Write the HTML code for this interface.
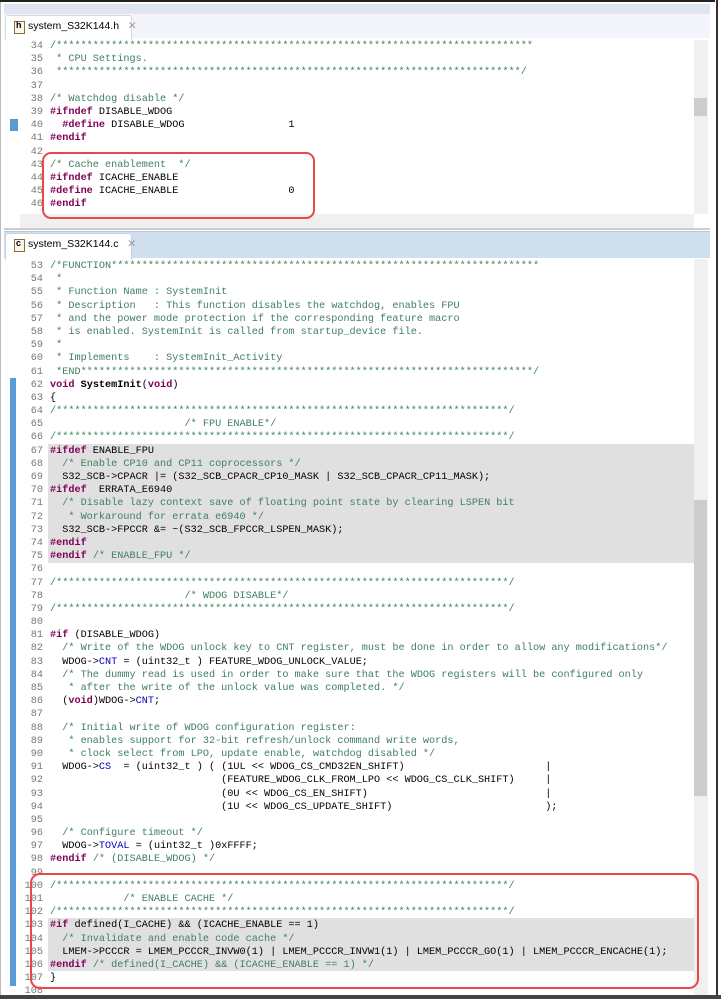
<!DOCTYPE html>
<html><head><meta charset="utf-8"><style>
body{margin:0;width:721px;height:999px;background:#fff;position:relative;overflow:hidden;font-family:"Liberation Mono",monospace}
.abs{position:absolute}
pre{margin:0;font-family:"Liberation Mono",monospace;font-size:10.2px;line-height:13.18px;color:#000;white-space:pre}
.ln{position:absolute;left:18px;width:25px;text-align:right;color:#787878}
.c{color:#3f7f5f}.k{color:#7f0055;font-weight:bold}.b{color:#0000c0}
.hl{position:absolute;left:48px;width:646px;background:#e0e0e0}
.tab{position:absolute;font-family:"Liberation Sans",sans-serif;font-size:10.5px;color:#000;white-space:nowrap}
</style></head><body>
<div class="abs" style="left:0;top:0;width:715px;height:999px;border-left:1px solid #bbb;border-right:2px solid #333"></div>
<div class="abs" style="left:0;top:0;width:715px;height:2px;background:#222"></div>
<!-- top panel -->
<div class="abs" style="left:4px;top:4px;width:706px;height:10px;background:#dfe6f2"></div>
<div class="abs" style="left:4px;top:14px;width:706px;height:24px;background:#f3f5fa"></div>
<div class="abs" style="left:5px;top:15px;width:125px;height:24px;background:#fff;border:1px solid #d4d9e3;border-bottom:none;border-radius:3px 3px 0 0"></div>
<div class="abs" style="left:14px;top:21px;width:9px;height:11px;border:1px solid #8a6d3b;background:#fbf6e8"></div>
<div class="tab" style="left:16px;top:20px;font-size:9px;font-weight:bold">h</div>
<div class="tab" style="left:28px;top:20px">system_S32K144.h&nbsp;&nbsp; <span style="color:#999">✕</span></div>
<div class="abs" style="left:694px;top:40px;width:14px;height:174px;background:#f0f0f0"></div>
<div class="abs" style="left:694px;top:98px;width:13px;height:18px;background:#cdcdcd"></div>
<div class="abs" style="left:20px;top:214px;width:674px;height:14px;background:#f0f0f0"></div>
<div class="abs" style="left:10px;top:119px;width:8px;height:12px;background:#5b9bd5"></div>
<div class="abs" style="left:4px;top:228px;width:706px;height:2px;background:#ccc"></div>
<pre class="ln" style="top:40px">34
35
36
37
38
39
40
41
42
43
44
45
46</pre>
<pre class="abs" style="left:50px;top:40px"><span class="c">/******************************************************************************
 * CPU Settings.
 ****************************************************************************/</span>

<span class="c">/* Watchdog disable */</span>
<span class="k">#ifndef</span> DISABLE_WDOG
  <span class="k">#define</span> DISABLE_WDOG                 1
<span class="k">#endif</span>

<span class="c">/* Cache enablement  */</span>
<span class="k">#ifndef</span> ICACHE_ENABLE
<span class="k">#define</span> ICACHE_ENABLE                  0
<span class="k">#endif</span></pre>
<div class="abs" style="left:42px;top:152px;width:269px;height:63px;border:2px solid #e8474c;border-radius:9px"></div>

<!-- bottom panel -->
<div class="abs" style="left:4px;top:231px;width:706px;height:26px;background:#cfdfee;border-top:1px solid #b8c8dc"></div>
<div class="abs" style="left:5px;top:233px;width:125px;height:26px;background:#fff;border:1px solid #c9d3e0;border-bottom:none;border-radius:3px 3px 0 0"></div>
<div class="abs" style="left:14px;top:239px;width:9px;height:11px;border:1px solid #8a6d3b;background:#fbf6e8"></div>
<div class="tab" style="left:16px;top:238px;font-size:9px;font-weight:bold">c</div>
<div class="tab" style="left:28px;top:238px">system_S32K144.c&nbsp;&nbsp; <span style="color:#999">✕</span></div>
<div class="abs" style="left:694px;top:259px;width:14px;height:740px;background:#f0f0f0"></div>
<div class="abs" style="left:694px;top:500px;width:13px;height:296px;background:#cdcdcd"></div>
<div class="abs" style="left:10px;top:378px;width:6px;height:608px;background:#5b9bd5"></div>
<div class="hl" style="top:444px;height:119px"></div>
<div class="hl" style="top:918px;height:53px"></div>
<pre class="ln" style="top:260px">53
54
55
56
57
58
59
60
61
62
63
64
65
66
67
68
69
70
71
72
73
74
75
76
77
78
79
80
81
82
83
84
85
86
87
88
89
90
91
92
93
94
95
96
97
98
99
100
101
102
103
104
105
106
107
108</pre>
<pre class="abs" style="left:50px;top:260px"><span class="c">/*FUNCTION**********************************************************************
 *
 * Function Name : SystemInit
 * Description   : This function disables the watchdog, enables FPU
 * and the power mode protection if the corresponding feature macro
 * is enabled. SystemInit is called from startup_device file.
 *
 * Implements    : SystemInit_Activity
 *END**************************************************************************/</span>
<span class="k">void</span> <b>SystemInit</b>(<span class="k">void</span>)
{
<span class="c">/**************************************************************************/</span>
<span class="c">                      /* FPU ENABLE*/</span>
<span class="c">/**************************************************************************/</span>
<span class="k">#ifdef</span> ENABLE_FPU
  <span class="c">/* Enable CP10 and CP11 coprocessors */</span>
  S32_SCB-&gt;CPACR |= (S32_SCB_CPACR_CP10_MASK | S32_SCB_CPACR_CP11_MASK);
<span class="k">#ifdef</span>  ERRATA_E6940
  <span class="c">/* Disable lazy context save of floating point state by clearing LSPEN bit
   * Workaround for errata e6940 */</span>
  S32_SCB-&gt;FPCCR &amp;= ~(S32_SCB_FPCCR_LSPEN_MASK);
<span class="k">#endif</span>
<span class="k">#endif</span> <span class="c">/* ENABLE_FPU */</span>

<span class="c">/**************************************************************************/</span>
<span class="c">                      /* WDOG DISABLE*/</span>
<span class="c">/**************************************************************************/</span>

<span class="k">#if</span> (DISABLE_WDOG)
  <span class="c">/* Write of the WDOG unlock key to CNT register, must be done in order to allow any modifications*/</span>
  WDOG-&gt;<span class="b">CNT</span> = (uint32_t ) FEATURE_WDOG_UNLOCK_VALUE;
  <span class="c">/* The dummy read is used in order to make sure that the WDOG registers will be configured only
   * after the write of the unlock value was completed. */</span>
  (<span class="k">void</span>)WDOG-&gt;<span class="b">CNT</span>;

  <span class="c">/* Initial write of WDOG configuration register:
   * enables support for 32-bit refresh/unlock command write words,
   * clock select from LPO, update enable, watchdog disabled */</span>
  WDOG-&gt;<span class="b">CS</span>  = (uint32_t ) ( (1UL &lt;&lt; WDOG_CS_CMD32EN_SHIFT)                       |
                            (FEATURE_WDOG_CLK_FROM_LPO &lt;&lt; WDOG_CS_CLK_SHIFT)     |
                            (0U &lt;&lt; WDOG_CS_EN_SHIFT)                             |
                            (1U &lt;&lt; WDOG_CS_UPDATE_SHIFT)                         );

  <span class="c">/* Configure timeout */</span>
  WDOG-&gt;<span class="b">TOVAL</span> = (uint32_t )0xFFFF;
<span class="k">#endif</span> <span class="c">/* (DISABLE_WDOG) */</span>

<span class="c">/**************************************************************************/</span>
<span class="c">            /* ENABLE CACHE */</span>
<span class="c">/**************************************************************************/</span>
<span class="k">#if</span> defined(I_CACHE) &amp;&amp; (ICACHE_ENABLE == 1)
  <span class="c">/* Invalidate and enable code cache */</span>
  LMEM-&gt;PCCCR = LMEM_PCCCR_INVW0(1) | LMEM_PCCCR_INVW1(1) | LMEM_PCCCR_GO(1) | LMEM_PCCCR_ENCACHE(1);
<span class="k">#endif</span> <span class="c">/* defined(I_CACHE) &amp;&amp; (ICACHE_ENABLE == 1) */</span>
}
</pre>
<div class="abs" style="left:30px;top:873px;width:665px;height:112px;border:2px solid #e8474c;border-radius:10px"></div>
<div class="abs" style="left:0;top:995px;width:721px;height:4px;background:#444"></div>
</body></html>
